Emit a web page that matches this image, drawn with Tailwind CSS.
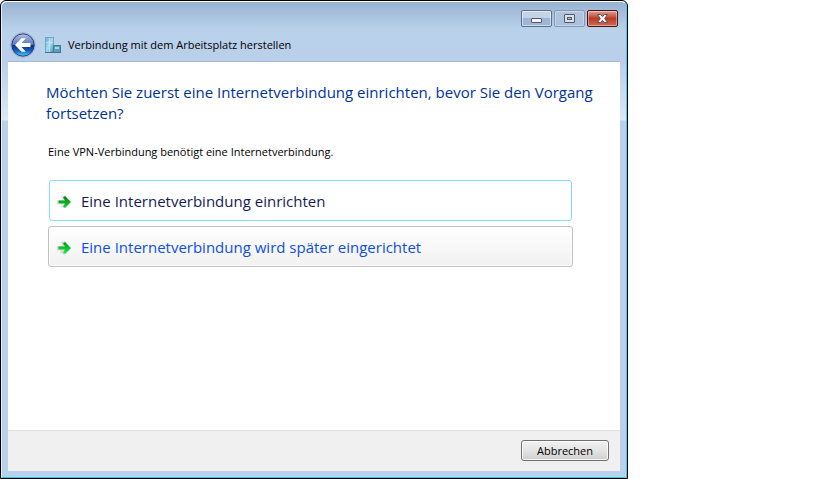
<!DOCTYPE html>
<html lang="de">
<head>
    <meta charset="UTF-8">
    <meta name="viewport" content="width=device-width, initial-scale=1.0">
    <title>Verbindung mit dem Arbeitsplatz herstellen</title>
    <script src="https://cdn.jsdelivr.net/npm/@tailwindcss/browser@4"></script>
</head>
<body class="bg-white text-black font-['Open_Sans',sans-serif]">
    <!-- Wizard window -->
    <div class="flex flex-col w-full max-w-[628px] min-h-screen rounded-t-md border border-black bg-[#b9d1ea] overflow-hidden">
        <div class="flex flex-col flex-1 rounded-t-md border border-t-white border-l-[#e4eefa] border-r-[#35d0f2] border-b-[#35c4e2] px-[6px] pb-[6px] bg-[linear-gradient(to_bottom,#98b3d2_0px,#b9d2ea_28px,#bacfea_60px,#dbe8f5_118px,#b9d1ea_119px)]">

            <header class="pt-2">
                <div class="flex justify-end gap-[2px] pr-[2px]">
                    <button type="button" aria-label="Minimieren" class="flex items-center justify-center w-[31px] h-[17px] rounded-xs border border-[#5d6f8c] inset-ring inset-ring-white/50 bg-linear-to-b from-[#c3d4e8] from-50% to-[#9db6d3] to-50%">
                        <svg class="w-[11px] h-[5px] mt-1" viewBox="0 0 11 5"><rect x="0.5" y="0.5" width="10" height="4" rx="0.5" fill="#f4f4f4" stroke="#535666"/></svg>
                    </button>
                    <button type="button" aria-label="Maximieren" class="flex items-center justify-center w-[31px] h-[17px] rounded-xs border border-[#8299b9] inset-ring inset-ring-white/30 bg-linear-to-b from-[#b0c6de] to-[#a9c1dc]">
                        <svg class="w-[11px] h-[9px]" viewBox="0 0 11 9"><rect x="0.5" y="0.5" width="10" height="8" rx="0.5" fill="#dcdfe5" stroke="#535666"/><rect x="3.5" y="3.5" width="4" height="2" fill="#a9c1dc" stroke="#535666"/></svg>
                    </button>
                    <button type="button" aria-label="Schließen" class="flex items-center justify-center w-[31px] h-[17px] rounded-xs border border-[#4b1220] inset-ring inset-ring-white/40 bg-linear-to-b from-[#dfa093] from-0% via-[#bb3a25] via-50% to-[#d2694f] to-100%">
                        <svg class="w-[13px] h-[11px]" viewBox="0 0 13 11"><path d="M1.5 1.5h3L6.5 3.6 8.500 1.5h3L8.700 5.500l2.800 4h-3L6.500 7.400 4.500 9.500h-3l2.800-4z" fill="#f6f6f6" stroke="#535666"/></svg>
                    </button>
                </div>
                <div class="flex items-center pl-[2px] pt-[5px] pb-[3px]">
                    <button type="button" aria-label="Zurück" class="w-[26px] h-[26px]">
                        <svg class="w-[26px] h-[26px]" viewBox="0 0 26 26">
                            <defs>
                                <linearGradient id="orb" x1="0" y1="0" x2="0" y2="1">
                                    <stop offset="0" stop-color="#b3c0e2"/>
                                    <stop offset="0.48" stop-color="#5a78bd"/>
                                    <stop offset="0.5" stop-color="#0b2d8e"/>
                                    <stop offset="0.75" stop-color="#1160b8"/>
                                    <stop offset="1" stop-color="#4fd0fb"/>
                                </linearGradient>
                            </defs>
                            <circle cx="13" cy="13" r="12.3" fill="#d5e2f3" stroke="#8095b8" stroke-width="0.6"/>
                            <circle cx="13" cy="13" r="11.2" fill="url(#orb)" stroke="#263c78"/>
                            <path d="M5 13l6.500-6.800h4.300L11.500 11h9v4h-9l4.300 4.800h-4.300z" fill="#fff"/>
                        </svg>
                    </button>
                    <svg class="w-4 h-4 ml-[9px]" viewBox="0 0 16 16">
                        <defs>
                            <linearGradient id="glass" x1="0" y1="0" x2="1" y2="1">
                                <stop offset="0" stop-color="#6aa9cf"/>
                                <stop offset="0.5" stop-color="#a8dcef"/>
                                <stop offset="1" stop-color="#4594bd"/>
                            </linearGradient>
                        </defs>
                        <rect x="0.5" y="0.5" width="8" height="15" fill="url(#glass)" stroke="#6fa9ca"/>
                        <path d="M4.500 1v14M1 5.500h7" stroke="#d3eff8" stroke-width="0.6"/>
                        <rect x="8.500" y="8.500" width="7" height="7" fill="#5c9ebd" stroke="#4b7990"/>
                        <path d="M10 10h4v2h-4z" fill="#a3dbe9"/>
                        <path d="M0 15.500h16" stroke="#466f89"/>
                    </svg>
                    <h1 class="ml-[7px] text-[11px] leading-4">Verbindung mit dem Arbeitsplatz herstellen</h1>
                </div>
            </header>

            <main class="flex-1 border-t border-[#a3b8d6] bg-white pl-[38px] pr-5 pt-5">
                <h2 class="text-[15px] leading-[21px] text-[#003399]">Möchten Sie zuerst eine Internetverbindung einrichten, bevor Sie den Vorgang fortsetzen?</h2>
                <p class="mt-5 ml-[2px] text-[11px] leading-4">Eine VPN-Verbindung benötigt eine Internetverbindung.</p>
                <div class="flex flex-col gap-[5px] mt-5 ml-[2px] mr-[27px]">
                    <button type="button" class="flex items-center h-[41px] mx-px pl-[7px] pt-[2px] rounded-[3px] border border-[#80dff8] bg-white text-[15px] text-[#151c55]">
                        <svg class="w-4 h-4" viewBox="0 0 16 16">
                            <defs>
                                <linearGradient id="arrow" x1="0" y1="0" x2="0" y2="1">
                                    <stop offset="0" stop-color="#067a0c"/>
                                    <stop offset="1" stop-color="#12d83c"/>
                                </linearGradient>
                            </defs>
                            <path d="M0 6h5L4 2l4-1 4 7-5 6.500-4-2 1.500-2H0z" fill="#e6e6e6"/>
                            <path d="M1.500 6.500H8L6 3.500 8 2l6 6-6 6-2-1.500L8 9.500H1.500z" fill="url(#arrow)"/>
                        </svg>
                        <span class="ml-2">Eine Internetverbindung einrichten</span>
                    </button>
                    <button type="button" class="flex items-center h-[41px] pl-2 pt-[2px] rounded-[3px] border border-[#c0c0c0] inset-ring inset-ring-white/80 bg-linear-to-b from-white to-[#f1f1f1] text-[15px] text-[#0f4fe0]">
                        <svg class="w-4 h-4" viewBox="0 0 16 16">
                            <defs>
                                <linearGradient id="arrowHot" x1="0" y1="0" x2="0" y2="1">
                                    <stop offset="0" stop-color="#089012"/>
                                    <stop offset="1" stop-color="#12f548"/>
                                </linearGradient>
                            </defs>
                            <path d="M0 6h5L4 2l4-1 4 7-5 6.500-4-2 1.500-2H0z" fill="#d8d8d8"/>
                            <path d="M1.500 6.500H8L6 3.500 8 2l6 6-6 6-2-1.500L8 9.500H1.500z" fill="url(#arrowHot)"/>
                        </svg>
                        <span class="ml-2">Eine Internetverbindung wird später eingerichtet</span>
                    </button>
                </div>
            </main>

            <footer class="flex items-start justify-end h-[41px] pt-[9px] px-[11px] border-t border-[#dfdfdf] bg-[#f0f0f0]">
                <button type="button" class="w-[88px] h-[21px] rounded-[3px] border border-[#707070] inset-ring inset-ring-white/80 bg-linear-to-b from-[#f2f2f2] via-[#e4e4e4] to-[#cfcfcf] text-[11px] leading-4">Abbrechen</button>
            </footer>
        </div>
    </div>
</body>
</html>
